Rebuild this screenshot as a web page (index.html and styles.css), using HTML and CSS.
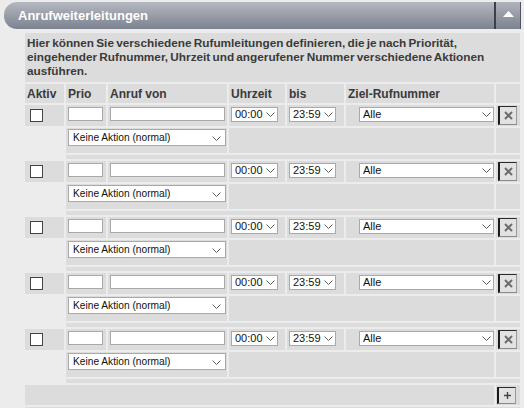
FILE: index.html
```html
<!DOCTYPE html>
<html lang="de">
<head>
<meta charset="utf-8">
<title>Anrufweiterleitungen</title>
<link rel="stylesheet" href="styles.css">
</head>
<body>
<div class="panel-head">
  <div class="panel-title">Anrufweiterleitungen</div>
  <button class="collapse" type="button" aria-label="Einklappen">
    <svg width="11" height="6" viewBox="0 0 11 6"><polygon points="5.5,0 11,6 0,6" fill="#fff"/></svg>
  </button>
</div>
<table class="grid">
  <colgroup>
    <col class="w-aktiv"><col class="w-prio"><col class="w-anruf"><col class="w-uhr"><col class="w-bis"><col class="w-ziel"><col class="w-btn">
  </colgroup>
  <tr class="intro"><td colspan="7">Hier können Sie verschiedene Rufumleitungen definieren, die je nach Priorität, eingehender Rufnummer, Uhrzeit und angerufener Nummer verschiedene Aktionen ausführen.</td></tr>
  <tr class="head"><th>Aktiv</th><th>Prio</th><th>Anruf von</th><th>Uhrzeit</th><th>bis</th><th>Ziel-Rufnummer</th><th></th></tr>

  <tr class="main">
    <td><input type="checkbox" class="chk"></td>
    <td><input type="text" class="in-prio"></td>
    <td><input type="text" class="in-anruf"></td>
    <td><span class="sel sel-time"><select><option>00:00</option></select><svg class="chev" width="9" height="5" viewBox="0 0 9 5"><polyline points="0.5,0.5 4.5,4.5 8.5,0.5" fill="none" stroke="#5a5a5a"/></svg></span></td>
    <td><span class="sel sel-time"><select><option>23:59</option></select><svg class="chev" width="9" height="5" viewBox="0 0 9 5"><polyline points="0.5,0.5 4.5,4.5 8.5,0.5" fill="none" stroke="#5a5a5a"/></svg></span></td>
    <td class="ziel"><span class="sel sel-ziel"><select><option>Alle</option></select><svg class="chev" width="9" height="5" viewBox="0 0 9 5"><polyline points="0.5,0.5 4.5,4.5 8.5,0.5" fill="none" stroke="#5a5a5a"/></svg></span></td>
    <td><button class="tool" type="button" aria-label="Löschen"><svg width="9" height="9" viewBox="0 0 9 9"><path d="M1 1L8 8M8 1L1 8" stroke="#6e6e6e" stroke-width="2"/></svg></button></td>
  </tr>
  <tr class="sub">
    <td class="blank"></td>
    <td colspan="2"><span class="sel sel-action"><select><option>Keine Aktion (normal)</option></select><svg class="chev" width="9" height="5" viewBox="0 0 9 5"><polyline points="0.5,0.5 4.5,4.5 8.5,0.5" fill="none" stroke="#5a5a5a"/></svg></span></td>
    <td colspan="3"></td>
    <td></td>
  </tr>
  <tr class="spacer"><td class="blank"></td><td colspan="6"></td></tr>

  <tr class="main">
    <td><input type="checkbox" class="chk"></td>
    <td><input type="text" class="in-prio"></td>
    <td><input type="text" class="in-anruf"></td>
    <td><span class="sel sel-time"><select><option>00:00</option></select><svg class="chev" width="9" height="5" viewBox="0 0 9 5"><polyline points="0.5,0.5 4.5,4.5 8.5,0.5" fill="none" stroke="#5a5a5a"/></svg></span></td>
    <td><span class="sel sel-time"><select><option>23:59</option></select><svg class="chev" width="9" height="5" viewBox="0 0 9 5"><polyline points="0.5,0.5 4.5,4.5 8.5,0.5" fill="none" stroke="#5a5a5a"/></svg></span></td>
    <td class="ziel"><span class="sel sel-ziel"><select><option>Alle</option></select><svg class="chev" width="9" height="5" viewBox="0 0 9 5"><polyline points="0.5,0.5 4.5,4.5 8.5,0.5" fill="none" stroke="#5a5a5a"/></svg></span></td>
    <td><button class="tool" type="button" aria-label="Löschen"><svg width="9" height="9" viewBox="0 0 9 9"><path d="M1 1L8 8M8 1L1 8" stroke="#6e6e6e" stroke-width="2"/></svg></button></td>
  </tr>
  <tr class="sub">
    <td class="blank"></td>
    <td colspan="2"><span class="sel sel-action"><select><option>Keine Aktion (normal)</option></select><svg class="chev" width="9" height="5" viewBox="0 0 9 5"><polyline points="0.5,0.5 4.5,4.5 8.5,0.5" fill="none" stroke="#5a5a5a"/></svg></span></td>
    <td colspan="3"></td>
    <td></td>
  </tr>
  <tr class="spacer"><td class="blank"></td><td colspan="6"></td></tr>

  <tr class="main">
    <td><input type="checkbox" class="chk"></td>
    <td><input type="text" class="in-prio"></td>
    <td><input type="text" class="in-anruf"></td>
    <td><span class="sel sel-time"><select><option>00:00</option></select><svg class="chev" width="9" height="5" viewBox="0 0 9 5"><polyline points="0.5,0.5 4.5,4.5 8.5,0.5" fill="none" stroke="#5a5a5a"/></svg></span></td>
    <td><span class="sel sel-time"><select><option>23:59</option></select><svg class="chev" width="9" height="5" viewBox="0 0 9 5"><polyline points="0.5,0.5 4.5,4.5 8.5,0.5" fill="none" stroke="#5a5a5a"/></svg></span></td>
    <td class="ziel"><span class="sel sel-ziel"><select><option>Alle</option></select><svg class="chev" width="9" height="5" viewBox="0 0 9 5"><polyline points="0.5,0.5 4.5,4.5 8.5,0.5" fill="none" stroke="#5a5a5a"/></svg></span></td>
    <td><button class="tool" type="button" aria-label="Löschen"><svg width="9" height="9" viewBox="0 0 9 9"><path d="M1 1L8 8M8 1L1 8" stroke="#6e6e6e" stroke-width="2"/></svg></button></td>
  </tr>
  <tr class="sub">
    <td class="blank"></td>
    <td colspan="2"><span class="sel sel-action"><select><option>Keine Aktion (normal)</option></select><svg class="chev" width="9" height="5" viewBox="0 0 9 5"><polyline points="0.5,0.5 4.5,4.5 8.5,0.5" fill="none" stroke="#5a5a5a"/></svg></span></td>
    <td colspan="3"></td>
    <td></td>
  </tr>
  <tr class="spacer"><td class="blank"></td><td colspan="6"></td></tr>

  <tr class="main">
    <td><input type="checkbox" class="chk"></td>
    <td><input type="text" class="in-prio"></td>
    <td><input type="text" class="in-anruf"></td>
    <td><span class="sel sel-time"><select><option>00:00</option></select><svg class="chev" width="9" height="5" viewBox="0 0 9 5"><polyline points="0.5,0.5 4.5,4.5 8.5,0.5" fill="none" stroke="#5a5a5a"/></svg></span></td>
    <td><span class="sel sel-time"><select><option>23:59</option></select><svg class="chev" width="9" height="5" viewBox="0 0 9 5"><polyline points="0.5,0.5 4.5,4.5 8.5,0.5" fill="none" stroke="#5a5a5a"/></svg></span></td>
    <td class="ziel"><span class="sel sel-ziel"><select><option>Alle</option></select><svg class="chev" width="9" height="5" viewBox="0 0 9 5"><polyline points="0.5,0.5 4.5,4.5 8.5,0.5" fill="none" stroke="#5a5a5a"/></svg></span></td>
    <td><button class="tool" type="button" aria-label="Löschen"><svg width="9" height="9" viewBox="0 0 9 9"><path d="M1 1L8 8M8 1L1 8" stroke="#6e6e6e" stroke-width="2"/></svg></button></td>
  </tr>
  <tr class="sub">
    <td class="blank"></td>
    <td colspan="2"><span class="sel sel-action"><select><option>Keine Aktion (normal)</option></select><svg class="chev" width="9" height="5" viewBox="0 0 9 5"><polyline points="0.5,0.5 4.5,4.5 8.5,0.5" fill="none" stroke="#5a5a5a"/></svg></span></td>
    <td colspan="3"></td>
    <td></td>
  </tr>
  <tr class="spacer"><td class="blank"></td><td colspan="6"></td></tr>

  <tr class="main">
    <td><input type="checkbox" class="chk"></td>
    <td><input type="text" class="in-prio"></td>
    <td><input type="text" class="in-anruf"></td>
    <td><span class="sel sel-time"><select><option>00:00</option></select><svg class="chev" width="9" height="5" viewBox="0 0 9 5"><polyline points="0.5,0.5 4.5,4.5 8.5,0.5" fill="none" stroke="#5a5a5a"/></svg></span></td>
    <td><span class="sel sel-time"><select><option>23:59</option></select><svg class="chev" width="9" height="5" viewBox="0 0 9 5"><polyline points="0.5,0.5 4.5,4.5 8.5,0.5" fill="none" stroke="#5a5a5a"/></svg></span></td>
    <td class="ziel"><span class="sel sel-ziel"><select><option>Alle</option></select><svg class="chev" width="9" height="5" viewBox="0 0 9 5"><polyline points="0.5,0.5 4.5,4.5 8.5,0.5" fill="none" stroke="#5a5a5a"/></svg></span></td>
    <td><button class="tool" type="button" aria-label="Löschen"><svg width="9" height="9" viewBox="0 0 9 9"><path d="M1 1L8 8M8 1L1 8" stroke="#6e6e6e" stroke-width="2"/></svg></button></td>
  </tr>
  <tr class="sub">
    <td class="blank"></td>
    <td colspan="2"><span class="sel sel-action"><select><option>Keine Aktion (normal)</option></select><svg class="chev" width="9" height="5" viewBox="0 0 9 5"><polyline points="0.5,0.5 4.5,4.5 8.5,0.5" fill="none" stroke="#5a5a5a"/></svg></span></td>
    <td colspan="3"></td>
    <td></td>
  </tr>
  <tr class="spacer"><td class="blank"></td><td colspan="6"></td></tr>

  <tr class="foot">
    <td colspan="6"></td>
    <td><button class="tool add" type="button" aria-label="Hinzufügen"><svg width="7" height="7" viewBox="0 0 7 7"><path d="M3.5 0V7M0 3.5H7" stroke="#444" stroke-width="1.4"/></svg></button></td>
  </tr>
  <tr class="spacer"><td colspan="7"></td></tr>
</table>
</body>
</html>
```

FILE: styles.css
```css
html, body {
  margin: 0;
  padding: 0;
  background: #ececec;
  font-family: "Liberation Sans", Arial, sans-serif;
}

.panel-head {
  display: flex;
  align-items: stretch;
  height: 27px;
  margin: 2px 3px 0 4px;
  border-radius: 13px 0 0 13px;
  background: linear-gradient(#b3b8c1 0%, #9ba0ab 45%, #7c8290 100%);
  overflow: hidden;
}

.panel-title {
  flex: 1;
  display: flex;
  align-items: center;
  padding-left: 14px;
  color: #fff;
  font-weight: bold;
  font-size: 13px;
}

.collapse {
  width: 27px;
  margin: 0;
  padding: 0;
  border: 0;
  border-left: 2px solid #3c3f47;
  border-right: 1px solid #50545d;
  background: linear-gradient(#aeb3bc 0%, #959aa6 50%, #7c8290 100%);
  display: flex;
  align-items: center;
  justify-content: center;
}

.collapse svg {
  display: block;
  margin-top: -3px;
}

.grid {
  border-collapse: separate;
  border-spacing: 2px;
  table-layout: fixed;
  width: 497px;
  margin: 2px 0 0 23px;
  color: #3a3a3a;
  font-size: 12px;
}

.w-aktiv { width: 39px; }
.w-prio { width: 40px; }
.w-anruf { width: 119px; }
.w-uhr { width: 56px; }
.w-bis { width: 57px; }
.w-ziel { width: 148px; }
.w-btn { width: 24px; }

.grid td, .grid th {
  background: #dcdcdc;
  padding: 0;
}

.grid td.blank {
  background: transparent;
}

.intro td {
  height: 49px;
  padding: 3px 2px 4px 2px;
  font-weight: bold;
  font-size: 11.8px;
  word-spacing: -1.1px;
  line-height: 14px;
  vertical-align: top;
  box-sizing: border-box;
}

.head th {
  height: 19px;
  text-align: left;
  font-weight: bold;
  padding: 0 2px;
  vertical-align: middle;
}

.main td {
  height: 21px;
  vertical-align: top;
  padding: 2px 2px 0 2px;
  box-sizing: border-box;
}

.main td:first-child {
  padding: 0;
}

.chk {
  appearance: none;
  -webkit-appearance: none;
  display: block;
  width: 13px;
  height: 13px;
  margin: 4px 0 0 5px;
  border: 1px solid #444;
  background: #fff;
  box-sizing: border-box;
}

input[type="text"] {
  display: block;
  height: 14px;
  border: 1px solid #a9a9a9;
  background: #fff;
  padding: 0;
  margin: 0;
  box-sizing: border-box;
  font-family: inherit;
  font-size: 11px;
}

.in-prio { width: 35px; }
.in-anruf { width: 115px; }

.sel {
  position: relative;
  display: block;
}

.sel select {
  appearance: none;
  -webkit-appearance: none;
  display: block;
  width: 100%;
  height: 15px;
  margin: 0;
  padding: 0 0 0 3px;
  border: 1px solid #a9a9a9;
  border-radius: 0;
  background: #fff;
  color: #111;
  font-family: inherit;
  font-size: 11px;
  line-height: 13px;
  box-sizing: border-box;
}

.chev {
  position: absolute;
  right: 3px;
  top: 5px;
  pointer-events: none;
}

.sel-time { width: 47px; }

.ziel .sel-ziel {
  width: 135px;
  margin-left: 11px;
}

.sel-action {
  width: 158px;
  margin: 1px 0 0 0;
}

.sel-action select {
  height: 17px;
  padding-left: 4px;
  font-size: 10.2px;
}

.sel-action .chev {
  right: 5px;
  top: 7px;
}

.sub td {
  height: 25px;
  vertical-align: top;
  padding: 0 2px;
  box-sizing: border-box;
}

.spacer td {
  height: 4px;
  padding: 0;
}

.foot td {
  height: 20px;
  padding: 0;
  vertical-align: top;
}

.tool {
  display: flex;
  align-items: center;
  justify-content: center;
  width: 19px;
  height: 19px;
  margin: 0 0 0 1px;
  padding: 0;
  border-style: solid;
  border-width: 1px 1px 1px 2px;
  border-color: #2a2a2a #9a9a9a #8a8a8a #1a1a1a;
  background: #e2e2e2;
  box-sizing: border-box;
}

.main td:last-child {
  padding: 1px 0 0 1px;
}

.tool.add {
  height: 17px;
  margin-top: 2px;
}
```
